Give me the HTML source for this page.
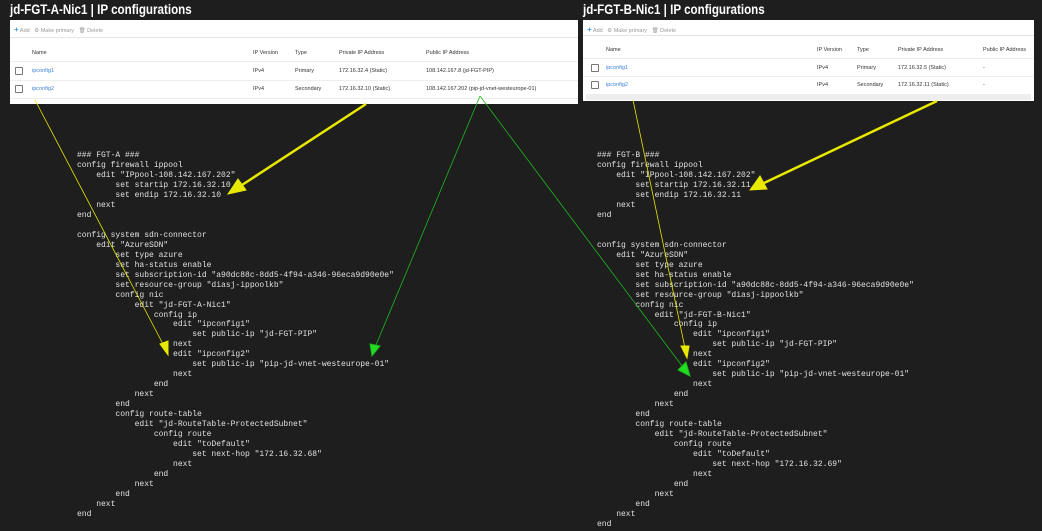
<!DOCTYPE html>
<html><head><meta charset="utf-8"><style>
html,body{margin:0;padding:0;background:#1e1e1e;width:1042px;height:531px;overflow:hidden;position:relative;font-family:"Liberation Sans",sans-serif}
.title{position:absolute;top:2px;color:#fff;font-weight:bold;font-size:13.5px;transform:scaleX(0.86);transform-origin:0 0;white-space:nowrap}
.panel{position:absolute;background:#fff;font-size:5.5px;color:#333}
.panel .tb{position:absolute;top:5px;left:4px;color:#999;font-size:5.5px;white-space:nowrap}
.panel .tb b{color:#0078d4;font-weight:normal;font-size:8px}
.panel .sep{position:absolute;left:0;right:0;top:17px;border-top:1px solid #e5e5e5}
.panel .c{position:absolute;white-space:nowrap}
.panel .rl{position:absolute;left:0;right:0;border-top:1px solid #eee}
.cb{position:absolute;width:6px;height:6px;border:1px solid #777;border-radius:1px}
.lk{color:#3a7fd5}
pre{position:absolute;margin:0;font-family:"Liberation Mono",monospace;font-size:8px;line-height:9.97px;color:#e0e0e0}
svg{position:absolute;left:0;top:0}
</style></head><body>
<div class="title" style="left:10px">jd-FGT-A-Nic1 | IP configurations</div>
<div class="title" style="left:583px">jd-FGT-B-Nic1 | IP configurations</div>

<div class="panel" style="left:10px;top:20px;width:568px;height:84px">
<div class="tb"><b>+</b> Add &nbsp; ⚙ Make primary &nbsp; 🗑 Delete</div>
<div class="sep"></div>
<div class="c" style="left:22px;top:30px">Name</div><div class="c" style="left:243px;top:30px">IP Version</div><div class="c" style="left:285px;top:30px">Type</div><div class="c" style="left:329px;top:30px">Private IP Address</div><div class="c" style="left:416px;top:30px">Public IP Address</div>
<div class="rl" style="top:41px"></div>
<div class="cb" style="left:5px;top:47px"></div><div class="c lk" style="left:22px;top:48px">ipconfig1</div><div class="c" style="left:243px;top:48px">IPv4</div><div class="c" style="left:285px;top:48px">Primary</div><div class="c" style="left:329px;top:48px">172.16.32.4 (Static)</div><div class="c" style="left:416px;top:48px">108.142.167.8 (jd-FGT-PIP)</div>
<div class="rl" style="top:60px"></div>
<div class="cb" style="left:5px;top:65px"></div><div class="c lk" style="left:22px;top:66px">ipconfig2</div><div class="c" style="left:243px;top:66px">IPv4</div><div class="c" style="left:285px;top:66px">Secondary</div><div class="c" style="left:329px;top:66px">172.16.32.10 (Static)</div><div class="c" style="left:416px;top:66px">108.142.167.202 (pip-jd-vnet-westeurope-01)</div>
<div class="rl" style="top:78px"></div>
</div>

<div class="panel" style="left:583px;top:20px;width:451px;height:81px">
<div class="tb"><b>+</b> Add &nbsp; ⚙ Make primary &nbsp; 🗑 Delete</div>
<div class="sep" style="top:15px"></div>
<div class="c" style="left:23px;top:27px">Name</div><div class="c" style="left:234px;top:27px">IP Version</div><div class="c" style="left:274px;top:27px">Type</div><div class="c" style="left:315px;top:27px">Private IP Address</div><div class="c" style="left:400px;top:27px">Public IP Address</div>
<div class="rl" style="top:38px"></div>
<div class="cb" style="left:8px;top:44px"></div><div class="c lk" style="left:23px;top:45px">ipconfig1</div><div class="c" style="left:234px;top:45px">IPv4</div><div class="c" style="left:274px;top:45px">Primary</div><div class="c" style="left:315px;top:45px">172.16.32.5 (Static)</div><div class="c" style="left:400px;top:45px">-</div>
<div class="rl" style="top:56px"></div>
<div class="cb" style="left:8px;top:61px"></div><div class="c lk" style="left:23px;top:62px">ipconfig2</div><div class="c" style="left:234px;top:62px">IPv4</div><div class="c" style="left:274px;top:62px">Secondary</div><div class="c" style="left:315px;top:62px">172.16.32.11 (Static)</div><div class="c" style="left:400px;top:62px">-</div>
<div style="position:absolute;left:3px;right:3px;top:74px;height:6px;background:#eee"></div>
</div>

<pre style="left:77px;top:151px">### FGT-A ###
config firewall ippool
    edit "IPpool-108.142.167.202"
        set startip 172.16.32.10
        set endip 172.16.32.10
    next
end

config system sdn-connector
    edit "AzureSDN"
        set type azure
        set ha-status enable
        set subscription-id "a90dc88c-8dd5-4f94-a346-96eca9d90e0e"
        set resource-group "diasj-ippoolkb"
        config nic
            edit "jd-FGT-A-Nic1"
                config ip
                    edit "ipconfig1"
                        set public-ip "jd-FGT-PIP"
                    next
                    edit "ipconfig2"
                        set public-ip "pip-jd-vnet-westeurope-01"
                    next
                end
            next
        end
        config route-table
            edit "jd-RouteTable-ProtectedSubnet"
                config route
                    edit "toDefault"
                        set next-hop "172.16.32.68"
                    next
                end
            next
        end
    next
end</pre>

<pre style="left:597px;top:151px">### FGT-B ###
config firewall ippool
    edit "IPpool-108.142.167.202"
        set startip 172.16.32.11
        set endip 172.16.32.11
    next
end


config system sdn-connector
    edit "AzureSDN"
        set type azure
        set ha-status enable
        set subscription-id "a90dc88c-8dd5-4f94-a346-96eca9d90e0e"
        set resource-group "diasj-ippoolkb"
        config nic
            edit "jd-FGT-B-Nic1"
                config ip
                    edit "ipconfig1"
                        set public-ip "jd-FGT-PIP"
                    next
                    edit "ipconfig2"
                        set public-ip "pip-jd-vnet-westeurope-01"
                    next
                end
            next
        end
        config route-table
            edit "jd-RouteTable-ProtectedSubnet"
                config route
                    edit "toDefault"
                        set next-hop "172.16.32.69"
                    next
                end
            next
        end
    next
end</pre>

<svg width="1042" height="531">
<g stroke="#e8e800" fill="#e8e800">
<line x1="35" y1="100" x2="164" y2="346" stroke-width="0.8"/>
<polygon points="168,355 160,344 168,341"/>
<line x1="366" y1="104" x2="242" y2="185" stroke-width="2.5"/>
<polygon points="228,194 238,179 246,190"/>
<line x1="633" y1="100" x2="685" y2="348" stroke-width="0.8"/>
<polygon points="687,358 681,346 689,346"/>
<line x1="937" y1="101" x2="764" y2="183" stroke-width="2.5"/>
<polygon points="750,190 760,176 767,189"/>
</g>
<g stroke="#1cb81c" fill="#22dd22">
<line x1="480" y1="96" x2="376" y2="345" stroke-width="0.8"/>
<polygon points="372,356 370,344 380,346"/>
<line x1="480" y1="96" x2="682" y2="366" stroke-width="0.8"/>
<polygon points="690,376 678,370 686,362"/>
</g>
</svg>
</body></html>
